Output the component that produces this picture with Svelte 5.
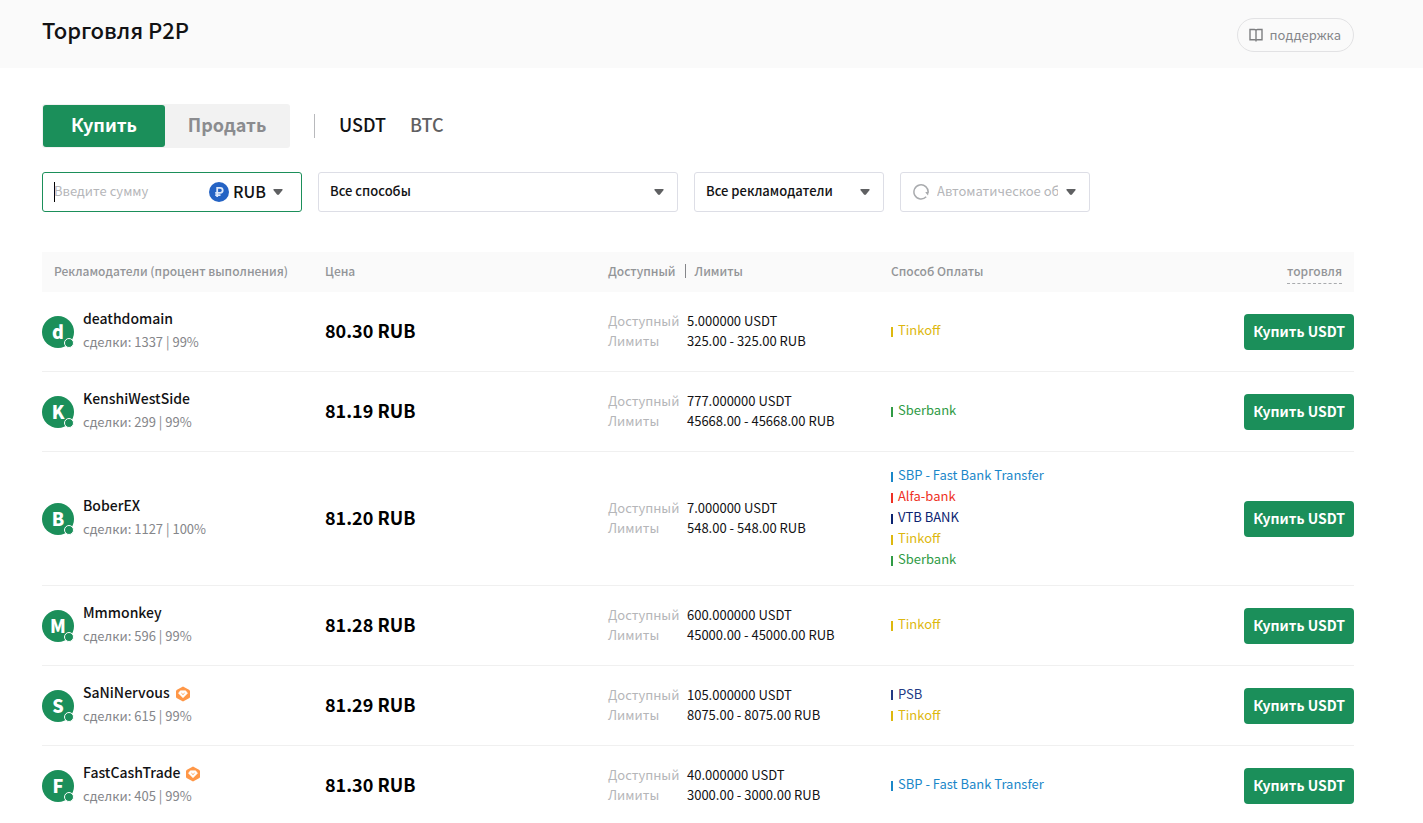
<script>
  const pay = {
    tinkoff: { name: 'Tinkoff', color: '#ddb80f' },
    sber: { name: 'Sberbank', color: '#309b45' },
    sbp: { name: 'SBP - Fast Bank Transfer', color: '#1a87c9' },
    alfa: { name: 'Alfa-bank', color: '#ee3124' },
    vtb: { name: 'VTB BANK', color: '#0b2370' },
    psb: { name: 'PSB', color: '#233a85' },
  };

  const offers = [
    { name: 'deathdomain', deals: 1337, rate: '99%', price: '80.30', available: '5.000000', limits: '325.00 - 325.00', methods: [pay.tinkoff] },
    { name: 'KenshiWestSide', deals: 299, rate: '99%', price: '81.19', available: '777.000000', limits: '45668.00 - 45668.00', methods: [pay.sber] },
    { name: 'BoberEX', deals: 1127, rate: '100%', price: '81.20', available: '7.000000', limits: '548.00 - 548.00', methods: [pay.sbp, pay.alfa, pay.vtb, pay.tinkoff, pay.sber] },
    { name: 'Mmmonkey', deals: 596, rate: '99%', price: '81.28', available: '600.000000', limits: '45000.00 - 45000.00', methods: [pay.tinkoff] },
    { name: 'SaNiNervous', verified: true, deals: 615, rate: '99%', price: '81.29', available: '105.000000', limits: '8075.00 - 8075.00', methods: [pay.psb, pay.tinkoff] },
    { name: 'FastCashTrade', verified: true, deals: 405, rate: '99%', price: '81.30', available: '40.000000', limits: '3000.00 - 3000.00', methods: [pay.sbp] },
  ];

  let side = $state('buy');
  let coin = $state('USDT');
</script>

{#snippet arrow()}
  <svg class="arrow" width="10" height="6" viewBox="0 0 10 6" aria-hidden="true">
    <path d="M1 0h8q1 0 .6.9L6 5.5q-1 .9-2 0L.4.9Q0 0 1 0z" fill="#5f6062" />
  </svg>
{/snippet}

<header>
  <h1>Торговля P2P</h1>
  <a class="support" href="#support">
    <svg width="14" height="14" viewBox="0 0 14 14" fill="none" stroke="#7d7e80" stroke-width="1.4" aria-hidden="true">
      <path d="M1 1.500h4.500Q7 1.500 7 2.600Q7 1.500 8.500 1.500H13v10.300H8.500Q7 11.800 7 12.600Q7 11.800 5.500 11.800H1zM7 2.500v11" />
    </svg>
    поддержка
  </a>
</header>

<main>
  <nav>
    <div class="tabs">
      <button class:active={side === 'buy'} onclick={() => (side = 'buy')}>Купить</button>
      <button class:active={side === 'sell'} onclick={() => (side = 'sell')}>Продать</button>
    </div>
    <div class="coins">
      {#each ['USDT', 'BTC'] as c}
        <button class:active={coin === c} onclick={() => (coin = c)}>{c}</button>
      {/each}
    </div>
  </nav>

  <form class="filters">
    <div class="field amount">
      <span class="caret"></span>
      <input type="text" placeholder="Введите сумму" aria-label="Введите сумму" />
      <svg width="20" height="20" viewBox="0 0 20 20" aria-hidden="true">
        <circle cx="10" cy="10" r="10" fill="#2463c4" />
        <path d="M8.200 15V5.800h3a2.500 2.500 0 0 1 0 5H6.200M6.200 13.100h5.300" fill="none" stroke="#dce8fa" stroke-width="1.800" />
      </svg>
      <select aria-label="Валюта"><option>RUB</option></select>
      {@render arrow()}
    </div>
    <div class="field methods">
      <select aria-label="Способ оплаты"><option>Все способы</option></select>
      {@render arrow()}
    </div>
    <div class="field small">
      <select aria-label="Рекламодатели"><option>Все рекламодатели</option></select>
      {@render arrow()}
    </div>
    <div class="field small refresh">
      <svg width="16" height="16" viewBox="0 0 16 16" aria-hidden="true">
        <path d="M13.200 12.800A7.100 7.100 0 1 1 15.100 8.600" fill="none" stroke="#a9abae" stroke-width="1.500" />
        <path d="M12.200 8.200L15.800 7.400L15 11.600z" fill="#a9abae" />
      </svg>
      <select aria-label="Автоматическое обновление"><option>Автоматическое об</option></select>
      {@render arrow()}
    </div>
  </form>

  <table>
    <thead>
      <tr>
        <th class="first">Рекламодатели (процент выполнения)</th>
        <th>Цена</th>
        <th><div class="split"><span>Доступный</span><i></i><span>Лимиты</span></div></th>
        <th>Способ Оплаты</th>
        <th class="last"><span class="hint">торговля</span></th>
      </tr>
    </thead>
    <tbody>
      {#each offers as o}
        <tr>
          <td>
            <div class="trader">
              <span class="avatar">{o.name[0]}<i></i></span>
              <div class="who">
                <a class="name" href="#trader">
                  {o.name}
                  {#if o.verified}
                    <svg width="14" height="16" viewBox="0 0 14 16" aria-hidden="true">
                      <path d="M7 .5l6 3.200q1 .5 1 1.500v5.600q0 1-1 1.500L7 15.500l-6-3.200q-1-.5-1-1.500V5.200q0-1 1-1.500z" fill="#ff9747" />
                      <path d="M4.400 4.800h5.200L11.500 7.200L7 11.800L2.500 7.200z" fill="#fff" stroke="#fff" stroke-width=".6" stroke-linejoin="round" />
                      <path d="M5.400 7.100L7 8.600l1.600-1.500" fill="none" stroke="#ff9747" stroke-width=".9" />
                    </svg>
                  {/if}
                </a>
                <div class="deals">сделки: {o.deals} | {o.rate}</div>
              </div>
            </div>
          </td>
          <td class="price">{o.price} RUB</td>
          <td>
            <dl>
              <dt>Доступный</dt><dd>{o.available} USDT</dd>
              <dt>Лимиты</dt><dd>{o.limits} RUB</dd>
            </dl>
          </td>
          <td class="ways">
            <ul>
              {#each o.methods as m}
                <li style:color={m.color}>{m.name}</li>
              {/each}
            </ul>
          </td>
          <td class="last"><button class="buy">Купить USDT</button></td>
        </tr>
      {/each}
    </tbody>
  </table>
</main>

<style>
  :global(body) {
    margin: 0;
    background: #fff;
    color: #121214;
    font: 13px/20px 'Noto Sans CJK SC', 'Noto Sans', sans-serif;
  }
  button, input, select {
    font: inherit;
    color: inherit;
    border: 0;
    margin: 0;
    padding: 0;
    background: none;
  }
  button { cursor: pointer; }
  a { color: inherit; text-decoration: none; }
  header {
    display: flex;
    justify-content: space-between;
    align-items: flex-start;
    box-sizing: border-box;
    height: 68px;
    padding: 13px 69px 0 42px;
    background: #fafafa;
  }
  h1 { margin: 0; font-size: 22px; line-height: 32px; font-weight: 500; }
  .support {
    display: flex;
    align-items: center;
    gap: 7px;
    margin-top: 5px;
    padding: 6px 12px 6px 11px;
    border: 1px solid #e2e2e4;
    border-radius: 17px;
    color: #85868a;
  }
  main { padding: 36px 69px 0 42px; }
  nav { display: flex; align-items: center; }
  .tabs { display: flex; padding: 1px; background: #f2f2f2; border-radius: 3px; }
  .tabs button {
    width: 122px;
    height: 42px;
    padding-bottom: 4px;
    border-radius: 3px;
    font-size: 18px;
    font-weight: 700;
    color: #8b8c8f;
  }
  .tabs button + button { width: 124px; }
  .tabs .active { background: #1b8f5a; color: #fff; }
  .coins {
    display: flex;
    align-items: center;
    gap: 24px;
    height: 24px;
    margin-left: 24px;
    padding-left: 24px;
    border-left: 1px solid #b8b9bc;
  }
  .coins button { padding-bottom: 4px; font-size: 18px; font-weight: 500; color: #5f6062; }
  .coins .active { color: #121214; }
  .filters { display: flex; gap: 16px; margin-top: 24px; }
  .field {
    display: flex;
    align-items: center;
    box-sizing: border-box;
    height: 40px;
    padding: 0 13px 0 11px;
    border: 1px solid #dddee6;
    border-radius: 3px;
  }
  .field input { flex: 1; min-width: 0; padding-bottom: 2px; outline: 0; }
  .field select { flex: 1; min-width: 0; padding-bottom: 2px; appearance: none; outline: 0; font-weight: 500; }
  .arrow { flex: none; }
  .amount { width: 260px; padding-right: 18px; border-color: #1b8f5a; }
  .amount select { flex: none; width: 40px; margin-left: 4px; padding-bottom: 3px; font-size: 16px; line-height: 24px; }
  .caret { width: 1px; height: 20px; margin-right: -1px; background: #000; }
  input::placeholder { color: #b5b6b9; opacity: 1; }
  .methods { width: 360px; }
  .small { width: 190px; }
  .refresh { gap: 8px; padding-left: 12px; }
  .refresh select { font-weight: 400; color: #b5b6b9; }
  table { width: 100%; margin-top: 40px; border-collapse: collapse; table-layout: fixed; }
  th {
    width: 21.57%;
    height: 38px;
    padding: 0 0 2px;
    background: #fafafa;
    text-align: left;
    font-size: 12px;
    font-weight: 500;
    color: #939598;
  }
  th.first { padding-left: 12px; box-sizing: border-box; }
  th.last { width: auto; padding-right: 12px; }
  .last { text-align: right; }
  .split { display: flex; align-items: center; gap: 9px; }
  .split i { width: 1px; height: 14px; background: #85868a; }
  .hint { display: inline-block; line-height: 24px; border-bottom: 1px dashed #a9abae; }
  td { height: 51px; padding: 14px 0; border-bottom: 1px solid #f0f0f0; vertical-align: middle; }
  .trader { display: flex; align-items: center; gap: 9px; }
  .avatar {
    position: relative;
    width: 32px;
    height: 32px;
    border-radius: 50%;
    background: #1b8f5a;
    color: #fff;
    font-size: 18px;
    line-height: 30px;
    font-weight: 900;
    text-align: center;
  }
  .avatar i {
    position: absolute;
    right: 0;
    bottom: 0;
    width: 8px;
    height: 8px;
    border: 1px solid #fff;
    border-radius: 50%;
    background: #1b8f5a;
  }
  .who { margin-bottom: 3px; }
  .name { display: flex; align-items: center; gap: 6px; font-size: 14px; line-height: 24px; font-weight: 500; }
  .name svg { margin-top: 3px; }
  .deals { line-height: 24px; color: #85868a; }
  td.price { padding: 12px 0 16px; font-size: 18px; font-weight: 700; color: #000; }
  dl { display: grid; grid-template-columns: 79px 1fr; margin: 0; padding-bottom: 1px; }
  dt { color: #b5b6b9; }
  dd { margin: 0; }
  td.ways { padding: 12px 0 16px; }
  ul { margin: 0; padding: 0; list-style: none; }
  li { display: flex; align-items: center; gap: 5px; line-height: 21px; }
  li::before { content: ''; width: 2px; height: 10px; margin-top: 4px; background: currentColor; }
  .buy {
    height: 36px;
    padding: 0 9px 2px;
    border-radius: 4px;
    background: #1b8f5a;
    color: #fff;
    font-size: 14px;
    font-weight: 700;
  }
</style>
